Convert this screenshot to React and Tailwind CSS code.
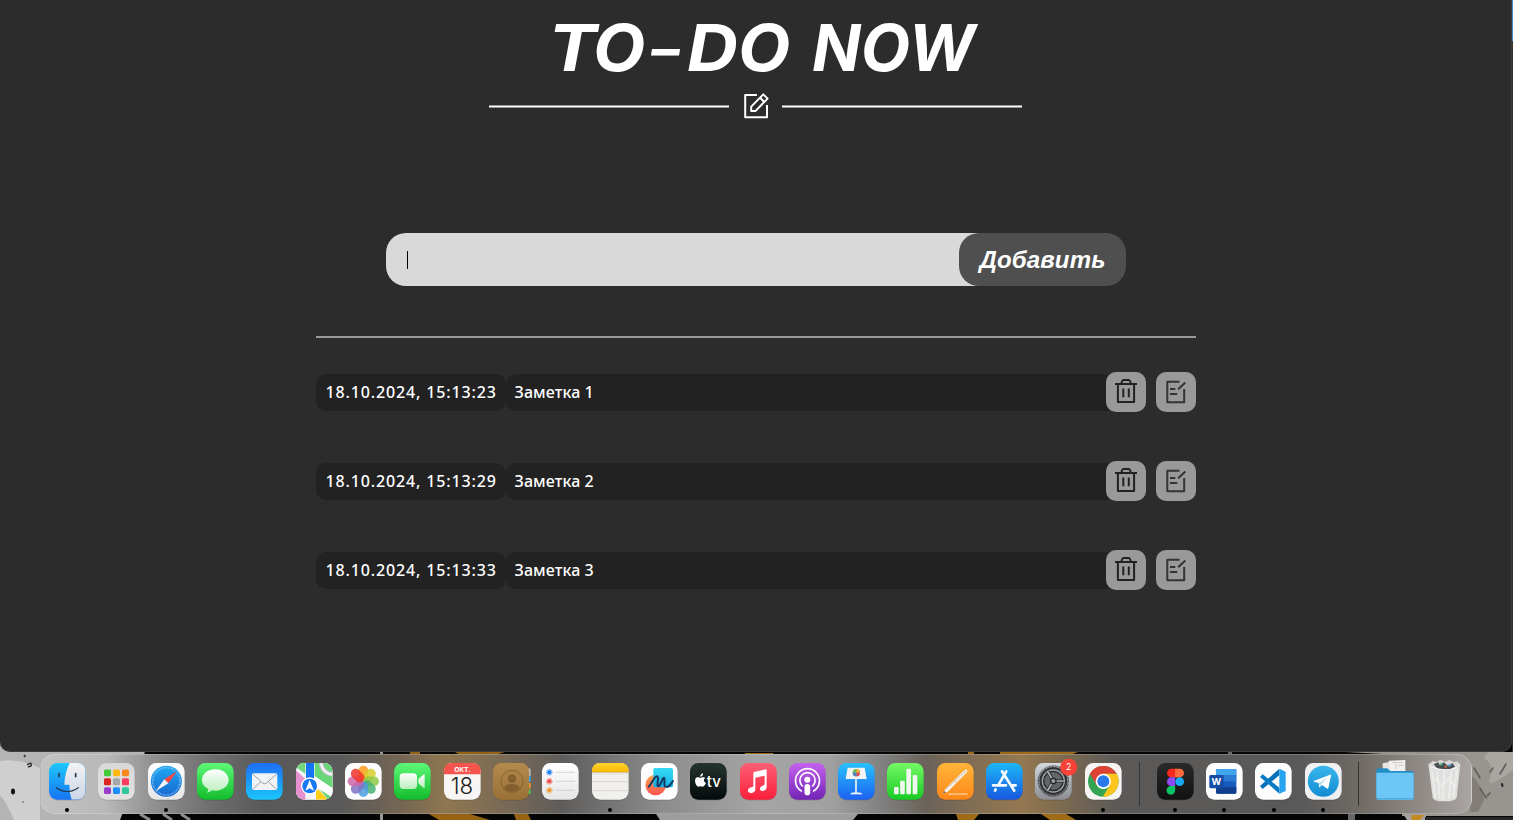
import React from "react";

const notes = [
  { date: "18.10.2024, 15:13:23", text: "Заметка 1" },
  { date: "18.10.2024, 15:13:29", text: "Заметка 2" },
  { date: "18.10.2024, 15:13:33", text: "Заметка 3" },
];

function HeaderIcon() {
  return (
    <svg className="h-[28px] w-[28px]" viewBox="0 0 28 28" fill="none" stroke="#fff" strokeWidth="2" strokeLinejoin="round">
      <path d="M14.9 3H3.2V25.2H25V13" />
      <path d="M9.2 18.9V14.6L21.3 2.4L25.6 6.6L13.6 18.9Z" />
      <path d="M18.1 5.8L22.3 10" />
    </svg>
  );
}

function TrashIcon() {
  return (
    <svg className="h-10 w-10" viewBox="0 0 40 40" fill="none" stroke="#222" strokeWidth="2">
      <path d="M9 12H31" />
      <path d="M15.3 11.5L16.2 9Q16.6 8 17.6 8H22.6Q23.6 8 24 9L24.9 11.5" />
      <path d="M11.9 12V30H28.1V12" strokeLinejoin="round" />
      <path d="M17.3 16.5V25.2M22.8 16.5V25.2" />
    </svg>
  );
}

function EditIcon() {
  return (
    <svg className="h-10 w-10" viewBox="0 0 40 40" fill="none" stroke="#333" strokeWidth="2" strokeLinejoin="round">
      <path d="M23.5 9.8H11.3V30.2H28.2V17" />
      <path d="M22.2 17.2L29.3 10.5" />
      <path d="M14 16.9H19.3M14 22H21.3" />
    </svg>
  );
}

function Tile({ children, fill }) {
  return (
    <svg className="h-[36.67px] w-[36.67px] shrink-0 overflow-visible" viewBox="0 0 110 110">
      <rect y="2.5" width="110" height="110" rx="25" fill="#000" opacity="0.16" />
      <rect width="110" height="110" rx="25" fill={fill} />
      {children}
    </svg>
  );
}

function Gradients() {
  const list = [
    ["gFinder", "#1fc8fb", "#1674f4"],
    ["gFace", "#f3f3f5", "#cbd6e5"],
    ["gWhite", "#ffffff", "#e6e6e6"],
    ["gGrey", "#d8d8da", "#e4e2e2"],
    ["gSafari", "#1fa9f2", "#1766cf"],
    ["gGreen", "#5df777", "#13bd2c"],
    ["gBubble", "#ffffff", "#b8eeba"],
    ["gMail", "#1e6df4", "#1bc5fb"],
    ["gRed", "#fb6075", "#fb1f3b"],
    ["gPodcast", "#c562ee", "#7324b5"],
    ["gKeynote", "#27c1fb", "#1d61f2"],
    ["gNumbers", "#75fa66", "#18ca24"],
    ["gPages", "#ffb53a", "#ff8719"],
    ["gStore", "#1db8f8", "#1758df"],
    ["gSettings", "#d3d9df", "#8b8d91"],
    ["gTv", "#25342f", "#050a0c"],
    ["gFigma", "#2a2a2a", "#111111"],
    ["gTelegram", "#3ab6ec", "#128cd1"],
    ["gYellow", "#ffd42d", "#f8b800"],
    ["gContact", "#b48a4d", "#987036"],
    ["gFree", "#ffa44d", "#fc5350"],
    ["gCard", "#26d8f4", "#0dabe4"],
  ];
  return (
    <svg className="absolute h-0 w-0">
      <defs>
        {list.map(([id, a, b]) => (
          <linearGradient key={id} id={id} x1="0" y1="0" x2="0" y2="1">
            <stop offset="0" stopColor={a} />
            <stop offset="1" stopColor={b} />
          </linearGradient>
        ))}
        <clipPath id="tileClip"><rect width="110" height="110" rx="25" /></clipPath>
        <clipPath id="chromeClip"><circle cx="55" cy="55" r="46" /></clipPath>
      </defs>
    </svg>
  );
}

const Finder = () => (
  <Tile fill="url(#gFinder)">
    <g clipPath="url(#tileClip)">
      <path d="M62 0Q47 30 46 65H61Q60 88 68 110H110V0Z" fill="url(#gFace)" />
    </g>
    <path d="M30 32V41M80 32V41" stroke="#25384b" strokeWidth="5" strokeLinecap="round" />
    <path d="M22 74Q54 97 88 74" fill="none" stroke="#25384b" strokeWidth="3.5" strokeLinecap="round" />
  </Tile>
);

const padColors = ["#45c83a", "#fcb711", "#f9881c", "#d8261f", "#a4a8a8", "#fb3c5f", "#9a3dce", "#1d8ffb", "#2dc79b"];
const Launchpad = () => (
  <Tile fill="url(#gGrey)">
    {padColors.map((c, i) => (
      <rect key={c} x={18 + (i % 3) * 27} y={19.5 + Math.floor(i / 3) * 26.5} width="21" height="20.5" rx="4.5" fill={c} />
    ))}
  </Tile>
);

const Safari = () => (
  <Tile fill="url(#gWhite)">
    <circle cx="55" cy="55" r="46.5" fill="url(#gSafari)" />
    <circle cx="55" cy="55" r="41" fill="none" stroke="#a9d8fa" strokeWidth="5" strokeDasharray="1.5 2.8" />
    <path d="M87 25L49 49L61 61Z" fill="#f8463e" />
    <path d="M23 85L49 49L61 61Z" fill="#f3f5f8" />
  </Tile>
);

const Messages = () => (
  <Tile fill="url(#gGreen)">
    <path d="M55 19C32 19 15 33 15 51C15 63 22 72 34 78Q34 85 29 89Q40 88 45 82Q50 83 55 83C78 83 95 69 95 51S78 19 55 19Z" fill="url(#gBubble)" />
  </Tile>
);

const Mail = () => (
  <Tile fill="url(#gMail)">
    <rect x="18" y="31" width="76" height="50" rx="5" fill="#f1f2f4" />
    <path d="M20 33L50 60Q56 65 62 60L92 33M20 79L45 56M92 79L67 56" fill="none" stroke="#8c9299" strokeWidth="2.5" />
  </Tile>
);

const Maps = () => (
  <Tile fill="#e9ebec">
    <g clipPath="url(#tileClip)">
      <rect width="110" height="110" fill="#f4f4f5" />
      <path d="M0 22L28 48V110H0Z" fill="#e690cf" />
      <path d="M0 0H28V33L0 12Z" fill="#70d87c" />
      <path d="M56 0H110V76L56 40Z" fill="#68d577" />
      <path d="M60 72L96 110H60Z" fill="#ffce15" />
      <path d="M66 72L110 102V110H96Z" fill="#67d276" />
      <path d="M56 40L110 76V104L60 72Z" fill="#fff" />
      <path d="M75 0Q80 32 110 34" fill="none" stroke="#b9bdc4" strokeWidth="14" />
      <path d="M75 0Q80 32 110 34" fill="none" stroke="#f0f1f3" strokeWidth="8" />
      <rect x="30" width="24" height="65" fill="#1375f5" />
    </g>
    <circle cx="41" cy="69" r="26" fill="#fff" />
    <circle cx="41" cy="69" r="22" fill="#1879f6" />
    <path d="M41 51L54 83L41 76L28 83Z" fill="#fff" />
  </Tile>
);

const petals = ["#f99d1d", "#d9cf2c", "#8fca48", "#4bb173", "#4d9ddd", "#8072c4", "#cf68a8", "#f0352d"];
const Photos = () => (
  <Tile fill="#fdfdfd">
    {petals.map((c, i) => (
      <rect key={c} x="40.5" y="8" width="29" height="46" rx="14.5" fill={c} opacity="0.86" transform={`rotate(${i * 45} 55 55)`} />
    ))}
  </Tile>
);

const FaceTime = () => (
  <Tile fill="url(#gGreen)">
    <rect x="17" y="31" width="52" height="47" rx="11" fill="url(#gBubble)" />
    <path d="M73 48L88 35Q92 32 92 37V72Q92 77 88 74L73 61Z" fill="url(#gBubble)" />
  </Tile>
);

const Calendar = () => (
  <Tile fill="#f7f6f5">
    <path d="M0 34V25Q0 0 25 0H85Q110 0 110 25V34Z" fill="#f5544d" />
    <text x="55" y="26" textAnchor="middle" fontSize="20" fontWeight="700" fill="#fff" fontFamily="Inter, sans-serif">ОКТ.</text>
    <text x="54" y="93" textAnchor="middle" fontSize="67" fontWeight="300" fill="#222" fontFamily="Inter, sans-serif">18</text>
  </Tile>
);

const Contacts = () => (
  <Tile fill="#8e6b3a">
    <path d="M100 16H110Q113 16 113 22V40H100Z" fill="#b8b5b0" />
    <path d="M100 40H113V57H100Z" fill="#35a5ef" />
    <path d="M100 60H113V76H100Z" fill="#f0912d" />
    <path d="M100 79H113V93H100Z" fill="#50bd58" />
    <rect width="108" height="110" rx="25" fill="url(#gContact)" />
    <circle cx="57" cy="55" r="33" fill="none" stroke="#7e5b2c" strokeWidth="2.5" />
    <circle cx="57" cy="47" r="13" fill="#85602f" />
    <path d="M33 76Q38 63 57 63T81 76Q71 87 57 87T33 76Z" fill="#85602f" />
  </Tile>
);

const Reminders = () => (
  <Tile fill="url(#gWhite)">
    {["#1679f6", "#ee4543", "#f2962c"].map((c, i) => (
      <g key={c}>
        <circle cx="22" cy={28 + i * 27} r="8.5" fill="none" stroke={c} strokeWidth="1.6" />
        <circle cx="22" cy={28 + i * 27} r="6" fill={c} />
        <path d={`M41 ${28 + i * 27}H99`} stroke="#c3c3c3" strokeWidth="2" />
      </g>
    ))}
  </Tile>
);

const Notes = () => (
  <Tile fill="#f1f0ed">
    <path d="M0 27V25Q0 0 25 0H85Q110 0 110 25V27Z" fill="url(#gYellow)" />
    <path d="M0 28H110" stroke="#c7a74c" strokeWidth="2" />
    <path d="M3 33H108" stroke="#aaa" strokeWidth="2" strokeDasharray="2 3" />
    <path d="M0 56H110M0 83H110" stroke="#cbcac7" strokeWidth="2" />
  </Tile>
);

const Freeform = () => (
  <Tile fill="#fefefe">
    <circle cx="44" cy="66" r="31" fill="url(#gFree)" />
    <rect x="37" y="15" width="59" height="58" rx="5" fill="url(#gCard)" opacity="0.94" />
    <path d="M23 71C31 64 40 40 48 40S45 70 52 70S64 43 69 44S65 72 76 72S88 64 96 54" fill="none" stroke="#123a60" strokeWidth="6" strokeLinecap="round" />
  </Tile>
);

const AppleTv = () => (
  <Tile fill="url(#gTv)">
    <path d="M39 43C35 43 33 45 31 45S26 43 23 43C12 44 14 61 21 69C24 73 27 71 31 70C35 70 38 73 41 70Q46 66 48 60C40 56 40 48 46 45Q43 42 39 43ZM31 42Q30 33 39 31Q40 39 31 42Z" fill="#fff" />
    <text x="50" y="71" fontSize="45" fontWeight="500" fill="#fff" fontFamily="Inter, sans-serif" letterSpacing="0.5">tv</text>
  </Tile>
);

const Music = () => (
  <Tile fill="url(#gRed)">
    <path d="M42 27L77 19Q80 18 80 22V71C80 80 74 84 67 84C56 83 58 70 68 68Q74 67 74 63V38L46 44V78C46 87 40 90 33 90C20 89 21 75 34 73Q40 72 40 68V31Q40 28 42 27Z" fill="#fff" />
  </Tile>
);

const Podcasts = () => (
  <Tile fill="url(#gPodcast)">
    <g fill="none" stroke="#fff" strokeWidth="5" strokeLinecap="round">
      <path d="M37 84A36 36 0 1 1 74 84" />
      <path d="M40 69A23 23 0 1 1 71 69" />
    </g>
    <circle cx="55" cy="50" r="9" fill="#fff" />
    <rect x="46.5" y="63" width="17" height="34" rx="8.5" fill="#fff" />
  </Tile>
);

const Keynote = () => (
  <Tile fill="url(#gKeynote)">
    <path d="M54 47V91" stroke="#e9f2f8" strokeWidth="5" />
    <path d="M38 93Q38 89 54 89T72 93Z" fill="#eef4f7" stroke="#eef4f7" strokeWidth="2" />
    <path d="M29 14H80L86 48H23Z" fill="#f4f4f5" />
    <circle cx="55" cy="29" r="11" fill="#66bd58" />
    <path d="M55 29V18A11 11 0 0 1 66 29Z" fill="#f6ab37" />
    <path d="M55 29H66A11 11 0 0 1 55 40Z" fill="#df4e5c" />
    <path d="M55 29V40A11 11 0 0 1 44 29Z" fill="#587dcb" />
  </Tile>
);

const Numbers = () => (
  <Tile fill="url(#gNumbers)">
    <g fill="#f1f7f0">
      <rect x="21" y="72" width="14" height="22" rx="3" />
      <rect x="39.5" y="53" width="14" height="41" rx="3" />
      <rect x="58" y="17" width="14" height="77" rx="3" />
      <rect x="77" y="36" width="14" height="58" rx="3" />
    </g>
  </Tile>
);

const Pages = () => (
  <Tile fill="url(#gPages)">
    <path d="M34 93H92" stroke="#ffcf96" strokeWidth="4" />
    <path d="M18 92L25 77L79 25Q87 18 90 20Q93 23 87 31L34 85Z" fill="#f5f2ee" />
    <path d="M25 80L87 24M52 52L59 60" stroke="#b7a890" strokeWidth="2" />
    <path d="M18 92L21 84L26 88Z" fill="#58503f" />
  </Tile>
);

const AppStore = () => (
  <Tile fill="url(#gStore)">
    <g stroke="#f5f9ff" strokeWidth="8" strokeLinecap="round">
      <path d="M61 25L36 68M48 25L85 83M21 67H60M77 67H89M29 79L27 83" />
    </g>
  </Tile>
);

const Settings = () => (
  <Tile fill="url(#gSettings)">
    <circle cx="55" cy="54" r="45" fill="none" stroke="#35373a" strokeWidth="4" strokeDasharray="2.6 1.8" />
    <circle cx="55" cy="54" r="42" fill="#303235" />
    <circle cx="55" cy="54" r="35" fill="#a0a2a5" />
    <circle cx="55" cy="54" r="29" fill="#626467" />
    <circle cx="55" cy="54" r="29" fill="none" stroke="#26282a" strokeWidth="4" />
    <g stroke="#1f2123" strokeWidth="9"><path d="M55 54H88M55 54L38 25M55 54L38 83" /></g>
    <g stroke="#b1b3b6" strokeWidth="5"><path d="M55 54H90M55 54L37 24M55 54L37 84" /></g>
    <circle cx="55" cy="54" r="8" fill="#999b9e" stroke="#242628" strokeWidth="4" />
    <circle cx="101" cy="13" r="25.5" fill="#f94238" />
    <text x="101" y="22" textAnchor="middle" fontSize="26" fill="#fff" fontFamily="Inter, sans-serif">2</text>
  </Tile>
);

const Chrome = () => (
  <Tile fill="#f6f5f4">
    <g clipPath="url(#chromeClip)">
      <rect width="110" height="110" fill="#34a354" />
      <path d="M55 55L15 32V0H110V32H55Z" fill="#df4136" />
      <path d="M55 32H110V110H48L75 66Z" fill="#fdc51e" />
      <path d="M15 32L35 66L55 55L55 32Z" fill="#df4136" />
    </g>
    <circle cx="55" cy="55" r="23" fill="#fff" />
    <circle cx="55" cy="55" r="18" fill="#2878e8" />
  </Tile>
);

const Figma = () => (
  <Tile fill="url(#gFigma)">
    <path d="M54.5 17H43A13 13 0 0 0 43 43.2H54.5Z" fill="#f6281f" />
    <path d="M54 17H68A13 13 0 0 1 68 43.2H54Z" fill="#ff6b3d" />
    <path d="M54.5 43H43A13 13 0 0 0 43 69.2H54.5Z" fill="#8f49f7" />
    <circle cx="68" cy="56" r="13" fill="#14acf8" />
    <path d="M54.5 69H43A13 13 0 1 0 54.5 82Z" fill="#0ac563" />
  </Tile>
);

const Word = () => (
  <Tile fill="#fdfdfd">
    <rect x="30" y="18" width="61" height="74" rx="4" fill="#185abd" />
    <path d="M30 36V22Q30 18 34 18H87Q91 18 91 22V36Z" fill="#41a5ee" />
    <rect x="30" y="36" width="61" height="19" fill="#2b7cd3" />
    <path d="M30 73H91V88Q91 92 87 92H34Q30 92 30 88Z" fill="#123f8b" />
    <rect x="10" y="36" width="43" height="40" rx="4" fill="#164ea6" />
    <text x="31" y="66" textAnchor="middle" fontSize="28" fontWeight="700" fill="#fff" fontFamily="Inter, sans-serif">W</text>
  </Tile>
);

const VsCode = () => (
  <Tile fill="#fdfdfd">
    <path d="M15 69L73 17V37L23 78Z" fill="#0870b8" />
    <path d="M15 42L23 34L73 74V92Z" fill="#087cc6" />
    <path d="M73 17L92 26V84L73 92Z" fill="#27a2ef" />
  </Tile>
);

const Telegram = () => (
  <Tile fill="#eff0f1">
    <circle cx="55" cy="55" r="46.5" fill="url(#gTelegram)" />
    <path d="M26 54L75 35Q79 34 78 39L70 75Q69 79 65 76L51 66L44 73Q42 74 42 70L41 60L27 56Q25 55 26 54Z" fill="#fff" />
    <path d="M42 61L69 42L49 63L45 72Z" fill="#b5dced" />
  </Tile>
);

const Folder = () => (
  <svg className="h-[42.67px] w-[38px]" viewBox="0 0 114 128">
    <path d="M20 13L60 5V40H20Z" fill="#e6e6e5" />
    <path d="M38 5L88 3V40H43Z" fill="#f2f1ef" />
    <path d="M48 11L61 9L59 31M65 11L81 10M66 19H83" fill="none" stroke="#b7b5b2" strokeWidth="2" />
    <path d="M1 36Q1 28 8 28H31Q35 28 39 32L43 36H106Q113 36 113 43V116Q113 122 107 122H7Q1 122 1 116Z" fill="#238fc4" />
    <path d="M1 44Q1 41 5 41H109Q113 41 113 45V116Q113 122 107 122H7Q1 122 1 116Z" fill="#6cc7f7" />
    <path d="M2 119H112" stroke="#4da8d9" strokeWidth="3" />
  </svg>
);

const Trash = () => (
  <svg className="h-[44px] w-[35px]" viewBox="0 0 105 132">
    <path d="M5 16L17 6L29 9L40 2L54 8L68 3L80 10L91 7L100 17L85 34H20Z" fill="#d8d8d7" />
    <path d="M20 16L34 10L39 20L50 10L64 22L76 12L84 23L65 32L32 29Z" fill="#494d50" />
    <path d="M35 17L43 11L48 19Z" fill="#47b88e" />
    <path d="M62 17L75 15L69 24Z" fill="#4d9bd2" />
    <path d="M50 22L59 19L58 28Z" fill="#df7840" />
    <path d="M4 15Q9 29 52 32T100 15L89 116Q85 127 52 127T17 116Z" fill="#e0e0df" />
    <path d="M14 31L25 115M31 36L38 119M52 34L47 122M73 36L66 119M90 30L79 115M25 57L44 83L68 56L81 85" fill="none" stroke="#ededec" strokeWidth="5" />
    <path d="M5 16Q17 30 52 32T99 16" fill="none" stroke="#fafafa" strokeWidth="3" />
  </svg>
);

const mainApps = [
  [Finder, true], [Launchpad], [Safari, true], [Messages], [Mail], [Maps], [Photos], [FaceTime],
  [Calendar], [Contacts], [Reminders], [Notes, true], [Freeform], [AppleTv], [Music], [Podcasts],
  [Keynote], [Numbers], [Pages], [AppStore], [Settings], [Chrome, true],
];
const extraApps = [[Figma, true], [Word, true], [VsCode, true], [Telegram, true]];

function Slot({ app: App, running }) {
  return (
    <div className="flex h-full w-[49.32px] shrink-0 flex-col items-center pt-[8px]">
      <App />
      {running && <span className="mt-[8.3px] h-1 w-1 shrink-0 rounded-full bg-black" />}
    </div>
  );
}

function Separator() {
  return (
    <div className="flex h-full w-[22.7px] shrink-0 justify-center pt-[7px]">
      <span className="h-11 w-px bg-[#343434]" />
    </div>
  );
}

function Wallpaper() {
  return (
    <svg className="absolute bottom-0 left-0 h-[80px] w-[1513px]" viewBox="0 740 1513 80">
      <rect y="740" width="1513" height="80" fill="#050505" />
      <path d="M0 740H148L144 755L120 820H0Z" fill="#b4b4b4" />
      <path d="M0 761Q20 758 40 768V820H14Q5 800 0 795Z" fill="#cfcfcf" />
      <ellipse cx="13" cy="791.5" rx="2" ry="3" fill="#111" />
      <path d="M24 755L25.5 757M27 765Q32 761 31 766L28 767" stroke="#333" strokeWidth="1.6" fill="none" />
      <circle cx="23" cy="802" r="1" fill="#888" />
      <path d="M140 814L150 820M163 814L172 820M181 814L190 820" stroke="#8b8b8b" strokeWidth="3" />
      <path d="M380 752H383V755H380ZM380 814H383V820H380Z" fill="#999" />
      <path d="M410 752H420V755H410ZM455 752H505L495 755H460ZM429 814H470L490 820H439ZM514 814H528L531 820H516Z" fill="#966315" />
      <path d="M656 814H858L853 820H660Z" fill="#9d9d9d" />
      <path d="M745 753H773V755H745ZM968 752H974V755H968ZM1000 752H1078L1070 755H1000ZM956 814H979L974 820H958ZM1041 814H1066L1076 820H1050Z" fill="#a06b17" />
      <path d="M1228 752H1232V755H1228ZM1348 814H1355V820H1348Z" fill="#686868" />
      <path d="M1345 752H1513V816L1402 816V755Z" fill="#98948f" />
      <path d="M1470 775Q1480 780 1484 800L1478 812H1470Z" fill="#827d79" />
      <path d="M1484 758Q1495 765 1490 778T1513 770V752H1488Z" fill="#aaa6a2" />
      <path d="M1474 768L1480 778M1490 772L1493 768M1500 774L1506 764M1487 796L1490 793M1480 788L1486 798" stroke="#625e5b" strokeWidth="1.6" strokeLinecap="round" fill="none" />
      <path d="M1502 784L1502.5 786" stroke="#222" strokeWidth="2" strokeLinecap="round" />
      <path d="M1403 814H1426V820H1407Z" fill="#a6a29c" />
      <path d="M1411 815H1424L1420 820H1412Z" fill="#c38a22" />
      <path d="M1425 817H1513V820H1425Z" fill="#272625" />
    </svg>
  );
}

export default function App() {
  return (
    <div className="relative flex h-[820px] w-[1513px] flex-col overflow-hidden bg-black">
      <Gradients />
      <Wallpaper />
      <div className="absolute right-0 top-0 h-[752px] w-px bg-[#34322f]">
        <div className="h-[41px] bg-[#3c8fd0]" />
      </div>

      <main className="relative flex h-[752px] w-[1512px] shrink-0 flex-col items-center rounded-b-[10px] border-b border-r border-[#3d3d3d] bg-[#2c2c2c]">
        <h1 className="mt-[9px] h-[77px] whitespace-nowrap pl-[12px] font-['Inter',sans-serif] text-[64px] font-bold italic leading-[77px] text-white">
          <span className="mr-[2px] inline-block origin-left scale-x-[1.14]">T</span>
          <span className="inline-block origin-left scale-x-[1.06]">O</span>
          <span className="relative -top-[2px] ml-[9px] mr-[8px] text-[56px] leading-none">–</span>
          <span className="mr-[5px] inline-block origin-left scale-x-[1.1]">D</span>
          <span className="mr-[9px] inline-block origin-left scale-x-[1.06]">O</span>
          {" NOW"}
        </h1>
        <div className="mt-[6px] flex h-[28px] items-center gap-[12.5px]">
          <span className="h-[2px] w-[240px] translate-y-[0.5px] bg-white" />
          <HeaderIcon />
          <span className="h-[2px] w-[240px] translate-y-[0.5px] bg-white" />
        </div>

        <form className="mt-[113px] flex h-[53px] w-[740px]">
          <div className="-mr-[20px] flex flex-1 items-center rounded-l-[20px] bg-[#d9d9d9] pl-[21px]">
            <span className="h-[18px] w-px bg-black" />
          </div>
          <button type="button" className="relative w-[167px] rounded-[20px] bg-[#4f4f4f] pl-[1px] font-['Liberation_Sans',Arial,sans-serif] text-[24px] font-bold italic tracking-[0.15px] text-white">Добавить</button>
        </form>

        <div className="mt-[50px] h-[2px] w-[880px] bg-[#999]" />

        <ul className="mt-[34px] flex w-[880px] flex-col gap-[49px] font-['Noto_Sans',sans-serif] text-[16px] font-medium text-white">
          {notes.map((n) => (
            <li key={n.date} className="flex h-10 items-center">
              <div className="flex h-[37px] w-[190px] items-center whitespace-nowrap rounded-[10px] bg-[#222] pl-[10px] tracking-[0.86px]">{n.date}</div>
              <div className="-mr-[10px] flex h-[37px] flex-1 items-center rounded-[10px] bg-[#222] pl-[9px] tracking-[0.1px]">{n.text}</div>
              <button type="button" className="relative h-10 w-10 rounded-[10px] bg-[#999]"><TrashIcon /></button>
              <button type="button" className="ml-[10px] h-10 w-10 rounded-[10px] bg-[#999]"><EditIcon /></button>
            </li>
          ))}
        </ul>
      </main>

      <nav className="relative ml-[40px] mt-[2px] flex h-[60px] w-[1432px] items-start rounded-[15px] border border-white/20 bg-[linear-gradient(90deg,#c3c3c3_0px,#b8b8b8_65px,#929292_110px,#6b6b6b_175px,#595959_225px,#5a5a5a_300px,#746653_360px,#8f7650_405px,#7d6c55_455px,#5f5d5b_520px,#707070_560px,#8c8c8c_620px,#a5a5a5_720px,#a0a0a0_790px,#818181_840px,#6b635a_885px,#7d6b55_920px,#947850_980px,#7d6a50_1020px,#5c5a58_1075px,#595959_1260px,#716b66_1320px,#aaa5a2_1430px)] pl-[1.8px]">
        {mainApps.map(([app, running], i) => <Slot key={i} app={app} running={running} />)}
        <Separator />
        {extraApps.map(([app, running], i) => <Slot key={i} app={app} running={running} />)}
        <Separator />
        <div className="flex w-[49.32px] justify-center pt-[4px]"><Folder /></div>
        <div className="flex w-[49.32px] justify-center pt-[4px]"><Trash /></div>
      </nav>
    </div>
  );
}
